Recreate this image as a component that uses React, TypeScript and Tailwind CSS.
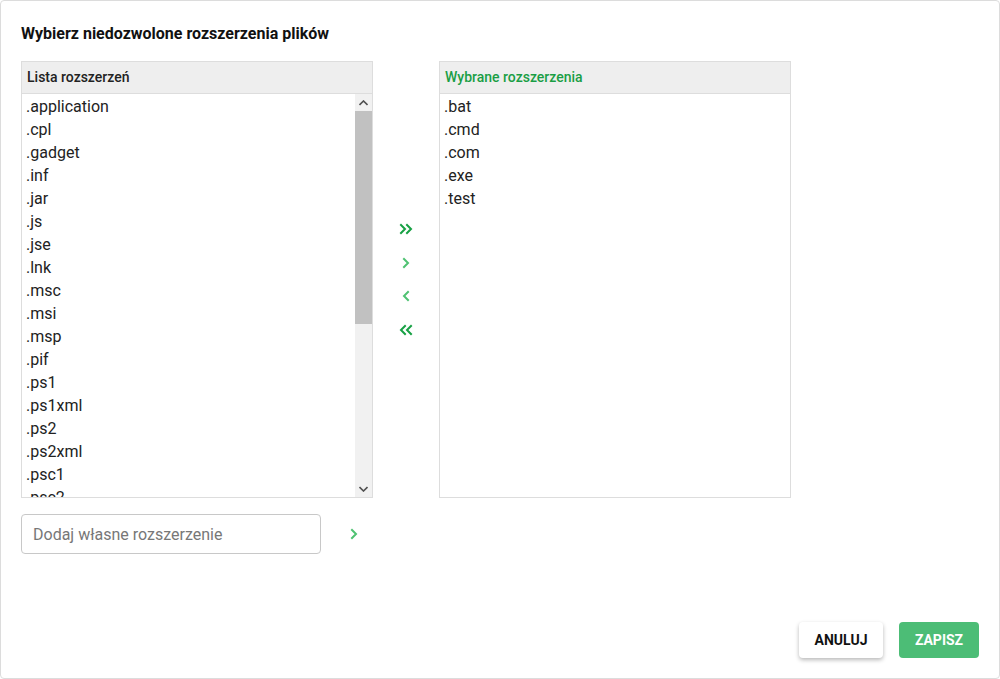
import React from "react";

const available = [
  ".application", ".cpl", ".gadget", ".inf", ".jar", ".js", ".jse", ".lnk", ".msc", ".msi", ".msp", ".pif", ".ps1", ".ps1xml", ".ps2", ".ps2xml", ".psc1", ".psc2", ".reg",
];
const selected = [".bat", ".cmd", ".com", ".exe", ".test"];

function Chevron({ dir, double, color }: { dir: "left" | "right"; double?: boolean; color: string }) {
  const flip = dir === "left" ? "scale(-1,1) translate(-16,0)" : undefined;
  return (
    <svg width="16" height="14" viewBox="0 0 16 14" fill="none">
      <g transform={flip} stroke={color} strokeWidth="2" strokeLinecap="square" strokeLinejoin="miter">
        {double ? (
          <>
            <path d="M3 3 L7 7 L3 11" />
            <path d="M9 3 L13 7 L9 11" />
          </>
        ) : (
          <path d="M6 3 L10 7 L6 11" />
        )}
      </g>
    </svg>
  );
}

export default function App() {
  return (
    <div
      className="w-[1000px] h-[679px] box-border border border-[#dcdcdc] rounded-[4px] bg-white flex flex-col px-[20px] pt-[22px] pb-[20px] text-[#212121]"
      style={{ fontFamily: "Roboto, 'Noto Sans', sans-serif" }}
    >
      <h1 className="text-[16px] leading-[22px] font-bold text-[#111]">Wybierz niedozwolone rozszerzenia plików</h1>

      <div className="flex mt-[16px]">
        {/* Left panel */}
        <div className="w-[352px] h-[437px] border border-[#dddddd] flex flex-col">
          <div className="h-[32px] bg-[#eeeeee] border-b border-[#dddddd] flex items-center px-[5px] text-[14px] font-medium text-[#222]">
            Lista rozszerzeń
          </div>
          <div className="flex flex-1 min-h-0">
            <div className="flex-1 overflow-hidden pl-[4px] pt-[1px]">
              {available.map((e) => (
                <div key={e} className="h-[23px] leading-[23px] text-[16px] text-[#222]">
                  {e}
                </div>
              ))}
            </div>
            <div className="w-[17px] bg-[#f1f1f1] flex flex-col">
              <div className="h-[17px] flex items-center justify-center">
                <svg width="9" height="6" viewBox="0 0 9 6"><path d="M0.5 5 L4.5 1 L8.5 5" stroke="#505050" strokeWidth="1.6" fill="none" /></svg>
              </div>
              <div className="h-[213px] bg-[#c1c1c1]" />
              <div className="flex-1" />
              <div className="h-[17px] flex items-center justify-center">
                <svg width="9" height="6" viewBox="0 0 9 6"><path d="M0.5 1 L4.5 5 L8.5 1" stroke="#505050" strokeWidth="1.6" fill="none" /></svg>
              </div>
            </div>
          </div>
        </div>

        {/* Middle buttons */}
        <div className="w-[66px] flex flex-col items-center justify-center">
          <button className="h-[34px] w-[32px] flex items-center justify-center"><Chevron dir="right" double color="#17a144" /></button>
          <button className="h-[33px] w-[32px] flex items-center justify-center"><Chevron dir="right" color="#4fc272" /></button>
          <button className="h-[34px] w-[32px] flex items-center justify-center"><Chevron dir="left" color="#4fc272" /></button>
          <button className="h-[34px] w-[32px] flex items-center justify-center"><Chevron dir="left" double color="#17a144" /></button>
        </div>

        {/* Right panel */}
        <div className="w-[352px] h-[437px] border border-[#dddddd] flex flex-col">
          <div className="h-[32px] bg-[#eeeeee] border-b border-[#dddddd] flex items-center px-[5px] text-[14px] font-medium text-[#1a9e45]">
            Wybrane rozszerzenia
          </div>
          <div className="flex-1 pl-[4px] pt-[1px]">
            {selected.map((e) => (
              <div key={e} className="h-[23px] leading-[23px] text-[16px] text-[#222]">
                {e}
              </div>
            ))}
          </div>
        </div>
      </div>

      <div className="flex items-center mt-[16px]">
        <input
          placeholder="Dodaj własne rozszerzenie"
          className="w-[300px] h-[40px] border border-[#c8c8c8] rounded-[4px] px-[11px] text-[16px] text-[#222] placeholder:text-[#777777] outline-none"
          style={{ fontFamily: "Roboto, 'Noto Sans', sans-serif" }}
        />
        <button className="ml-[24px] w-[18px] h-[40px] flex items-center justify-center">
          <Chevron dir="right" color="#4fc272" />
        </button>
      </div>

      <div className="flex-1" />

      <div className="flex justify-end gap-[16px]">
        <button className="w-[84px] h-[36px] rounded-[4px] bg-white text-[14px] font-bold text-[#111] shadow-[0_2px_4px_rgba(0,0,0,0.28)]">
          ANULUJ
        </button>
        <button className="w-[80px] h-[36px] rounded-[4px] bg-[#4cbd76] text-[14px] font-bold text-white">
          ZAPISZ
        </button>
      </div>
    </div>
  );
}
